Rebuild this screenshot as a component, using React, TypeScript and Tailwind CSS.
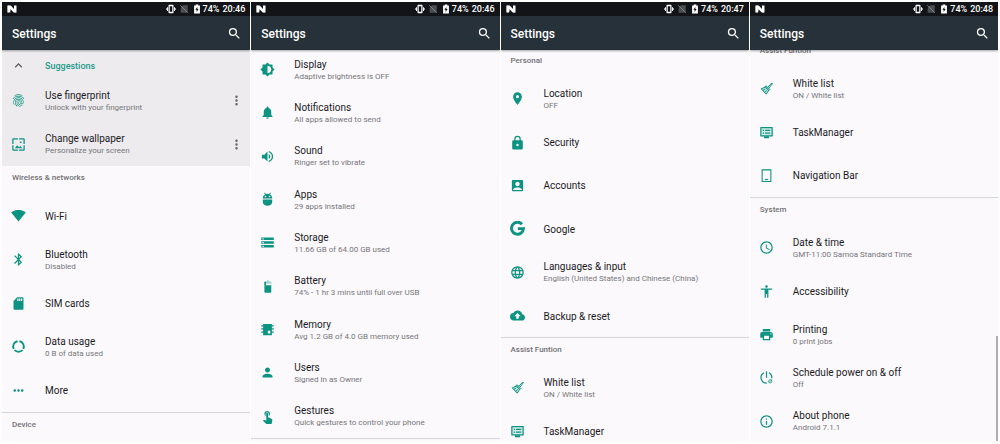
import type { ComponentType, ReactNode } from "react";
import {
  MdAccessTime,
  MdAccessibility,
  MdAccountBox,
  MdBackup,
  MdBluetooth,
  MdBrightness6,
  MdExpandLess,
  MdFingerprint,
  MdInfoOutline,
  MdLanguage,
  MdLocationOn,
  MdMoreHoriz,
  MdMoreVert,
  MdNotifications,
  MdPerson,
  MdPrint,
  MdSdCard,
  MdSearch,
  MdSignalWifi4Bar,
  MdStorage,
  MdTouchApp,
  MdVolumeUp,
  MdWallpaper,
} from "react-icons/md";

type IconProps = { className?: string };
type Icon = ComponentType<IconProps>;

function Svg({ className, children }: IconProps & { children: ReactNode }) {
  return (
    <svg viewBox="0 0 24 24" className={className} fill="currentColor" aria-hidden="true">
      {children}
    </svg>
  );
}

const DataUsageIcon: Icon = (p) => (
  <Svg {...p}>
    <g fill="none" stroke="currentColor" strokeWidth="3">
      <path d="M13.500 3.600A8.500 8.500 0 0 1 19.600 15.800" />
      <path d="M18.400 17.600A8.500 8.500 0 0 1 5.600 17.600" />
      <path d="M4.400 15.800A8.500 8.500 0 0 1 10.500 3.600" />
    </g>
  </Svg>
);

const AppsIcon: Icon = (p) => (
  <Svg {...p}>
    <path d="M4.500 12v4c0 3.800 3.300 6 7.500 6s7.500-2.200 7.500-6v-4z" />
    <path
      fillRule="evenodd"
      d="M15.700 3.700 17.500 1.800l-.9-.9-2.200 2.200a7 7 0 0 0-4.800 0L7.400.9l-.9.9 1.800 1.900a6.500 6.500 0 0 0-3.800 5.600v1.200h15V9.300a6.500 6.500 0 0 0-3.800-5.600zM8.700 8.400a1.300 1.300 0 1 1 0-2.600 1.300 1.300 0 0 1 0 2.600zm6.600 0a1.300 1.300 0 1 1 0-2.600 1.300 1.300 0 0 1 0 2.600z"
    />
  </Svg>
);

const BatteryIcon: Icon = (p) => (
  <Svg {...p}>
    <path d="M7 10v10.700c0 .7.600 1.300 1.300 1.300h8.400c.7 0 1.300-.6 1.300-1.300V10z" />
    <path opacity=".4" d="M16.700 4H14V2h-3v2H8.300C7.600 4 7 4.600 7 5.300V10h3V7h7l1 3V5.300c0-.7-.6-1.300-1.300-1.300z" />
    <path d="M7 4.500h2.500V10H7z" />
  </Svg>
);

const MemoryIcon: Icon = (p) => (
  <Svg {...p}>
    <path
      fillRule="evenodd"
      d="M5 3h14v2h3v2h-3v3h3v2h-3v3h3v2h-3v4H5v-4H2v-2h3v-3H2v-2h3V7H2V5h3zM12.500 14v4.500h4V14z"
    />
  </Svg>
);

const LockIcon: Icon = (p) => (
  <Svg {...p}>
    <path
      fillRule="evenodd"
      d="M18.500 8.500H17.200V6.200a5.200 5.200 0 0 0-10.400 0v2.300H5.500a2 2 0 0 0-2 2V21a2 2 0 0 0 2 2h13a2 2 0 0 0 2-2V10.500a2 2 0 0 0-2-2zM8.800 6.200a3.200 3.200 0 0 1 6.400 0v2.300H8.800zM12 18a2 2 0 1 1 0-4 2 2 0 0 1 0 4z"
    />
  </Svg>
);

const GoogleIcon: Icon = (p) => (
  <Svg {...p}>
    <path
      fill="none"
      stroke="currentColor"
      strokeWidth="4.600"
      d="M19.200 5.200A9.600 9.600 0 1 0 21.600 12.200H12.500"
    />
  </Svg>
);

const BrushIcon: Icon = (p) => (
  <Svg {...p}>
    <g fill="none" stroke="currentColor" strokeWidth="1.600" strokeLinejoin="round" strokeLinecap="round">
      <path d="M14.500 9.500 20.500 3.200l1 1-5.500 7" />
      <path fill="#8fd0c7" d="m11.700 8 5.500 5.500-2 2-5.500-5.500z" />
      <path fill="#bfe3de" d="m9.700 10-6.200 2.500 8 8.500 3.700-5.500z" />
      <path d="m6.500 15 3-2M9 18l3-2.500" />
    </g>
  </Svg>
);

const TaskIcon: Icon = (p) => (
  <Svg {...p}>
    <path fill="#d5ece9" stroke="currentColor" strokeWidth="2" strokeLinejoin="round" d="M3 4h18v13.500H3z" />
    <path d="M8 18h8v3H8zM6 7.500h2v2H6zM9.500 7.500H18v2H9.500zM6 12h2v2H6zM9.500 12H18v2H9.500z" />
  </Svg>
);

const NavigationIcon: Icon = (p) => (
  <Svg {...p}>
    <path fill="none" stroke="currentColor" strokeWidth="1.700" d="M5 3h14v18.500H5z" />
    <path d="M9.500 17.500h5v1.800h-5z" />
  </Svg>
);

const PowerIcon: Icon = (p) => (
  <Svg {...p}>
    <g fill="none" stroke="currentColor" strokeWidth="1.900">
      <path d="M12 2v10.500" />
      <path d="M8 4.300a8.800 8.800 0 0 0 4.500 16.600M16 4.300a9 9 0 0 1 4.400 9" />
      <circle cx="18" cy="18" r="2.600" strokeWidth="1.200" />
      <path strokeWidth="1.200" d="m15.500 21 5-6" />
    </g>
  </Svg>
);

const NougatIcon: Icon = (p) => (
  <Svg {...p}>
    <path fill="#9aa0a3" d="M3 5h4l14 14h-4zM3 5v14l6-3V8z" />
    <path d="M3 5h6.500L16 12V5h5v14h-5.500L8.500 12v7H3z" />
  </Svg>
);

const VibrateIcon: Icon = (p) => (
  <Svg {...p}>
    <path
      fillRule="evenodd"
      d="M7.500 2h9c1 0 1.500.7 1.500 1.500v17c0 .8-.5 1.500-1.500 1.500h-9C6.500 22 6 21.300 6 20.500v-17C6 2.700 6.500 2 7.500 2zM9 5.500v13h6v-13z"
    />
    <path d="M2.500 7.500h2.300v9H2.500zM19.200 7.500h2.300v9h-2.300zM0 10h1.800v4H0zM22.200 10H24v4h-1.800z" />
  </Svg>
);

const NoSimIcon: Icon = (p) => (
  <Svg {...p}>
    <path fill="#4c4f52" d="M10 3h11v18H4V9z" />
    <path fill="none" stroke="#8a8c8f" strokeWidth="2" d="m3 3 18 18" />
  </Svg>
);

const ChargeIcon: Icon = (p) => (
  <Svg {...p}>
    <path fillRule="evenodd" d="M9 1h6v2.500h4V23H5V3.500h4zM13 7l-5 7h3v5l5-7h-3z" />
  </Svg>
);

type Entry = { icon: Icon; title: string; note?: string; menu?: boolean };

function Row({ icon: RowIcon, title, note, menu }: Entry) {
  return (
    <li className="flex min-h-9 flex-1 basis-0 items-center">
      <button type="button" className="flex h-full min-w-0 flex-1 items-center gap-[19px] pl-[9px] text-left">
        <RowIcon className="size-[15px] shrink-0 text-[#0d9381]" />
        <span className="flex min-w-0 flex-col pt-0.5 whitespace-nowrap">
          <span className="text-[10px] leading-3 text-[#1c1b1f]">{title}</span>
          {note && <span className="text-[8px] leading-3 text-[#77767a]">{note}</span>}
        </span>
      </button>
      {menu && (
        <button type="button" aria-label={`Options for ${title}`} className="pr-1.5">
          <MdMoreVert className="size-[15px] text-[#6b6a6d]" />
        </button>
      )}
    </li>
  );
}

function Heading({ children, divided }: { children: ReactNode; divided?: boolean }) {
  return (
    <li className={divided ? "shrink-0 border-t border-[#d6d5d8]" : "shrink-0"}>
      <h2 className="flex h-7 items-center pb-1 pl-2.5 text-[8px] leading-3 font-medium text-[#727175]">
        {children}
      </h2>
    </li>
  );
}

function Rows({ items }: { items: Entry[] }) {
  return (
    <>
      {items.map((item) => (
        <Row key={item.title} {...item} />
      ))}
    </>
  );
}

function Phone({ time, children }: { time: string; children: ReactNode }) {
  return (
    <section className="relative flex min-w-0 flex-col overflow-hidden bg-[#fbf9fc]">
      <div className="relative z-10 shrink-0 shadow-[0_1px_2px_rgba(0,0,0,0.35)]">
        <div className="flex h-3.5 items-center bg-[#121418] pr-[5px] pl-1 text-[9px] leading-3 font-medium text-white">
          <NougatIcon className="size-3" />
          <div className="ml-auto flex items-center gap-[3px]">
            <VibrateIcon className="size-2.5" />
            <NoSimIcon className="size-2.5" />
            <div className="flex items-center gap-px">
              <ChargeIcon className="size-2.5" />
              <span>74%</span>
            </div>
            <span>{time}</span>
          </div>
        </div>
        <header className="flex h-[34px] items-center justify-between bg-[#27313a] pr-2 pl-2.5">
          <h1 className="pt-0.5 text-[12px] leading-4 font-medium text-white">Settings</h1>
          <button type="button" aria-label="Search settings">
            <MdSearch className="size-[15px] text-white" />
          </button>
        </header>
      </div>
      {children}
    </section>
  );
}

const suggestions: Entry[] = [
  { icon: MdFingerprint, title: "Use fingerprint", note: "Unlock with your fingerprint", menu: true },
  { icon: MdWallpaper, title: "Change wallpaper", note: "Personalize your screen", menu: true },
];

const wireless: Entry[] = [
  { icon: MdSignalWifi4Bar, title: "Wi-Fi" },
  { icon: MdBluetooth, title: "Bluetooth", note: "Disabled" },
  { icon: MdSdCard, title: "SIM cards" },
  { icon: DataUsageIcon, title: "Data usage", note: "0 B of data used" },
  { icon: MdMoreHoriz, title: "More" },
];

const device: Entry[] = [
  { icon: MdBrightness6, title: "Display", note: "Adaptive brightness is OFF" },
  { icon: MdNotifications, title: "Notifications", note: "All apps allowed to send" },
  { icon: MdVolumeUp, title: "Sound", note: "Ringer set to vibrate" },
  { icon: AppsIcon, title: "Apps", note: "29 apps installed" },
  { icon: MdStorage, title: "Storage", note: "11.66 GB of 64.00 GB used" },
  { icon: BatteryIcon, title: "Battery", note: "74% - 1 hr 3 mins until full over USB" },
  { icon: MemoryIcon, title: "Memory", note: "Avg 1.2 GB of 4.0 GB memory used" },
  { icon: MdPerson, title: "Users", note: "Signed in as Owner" },
  { icon: MdTouchApp, title: "Gestures", note: "Quick gestures to control your phone" },
];

const personal: Entry[] = [
  { icon: MdLocationOn, title: "Location", note: "OFF" },
  { icon: LockIcon, title: "Security" },
  { icon: MdAccountBox, title: "Accounts" },
  { icon: GoogleIcon, title: "Google" },
  { icon: MdLanguage, title: "Languages & input", note: "English (United States) and Chinese (China)" },
  { icon: MdBackup, title: "Backup & reset" },
];

const assist: Entry[] = [
  { icon: BrushIcon, title: "White list", note: "ON / White list" },
  { icon: TaskIcon, title: "TaskManager" },
  { icon: NavigationIcon, title: "Navigation Bar" },
];

const system: Entry[] = [
  { icon: MdAccessTime, title: "Date & time", note: "GMT-11:00 Samoa Standard Time" },
  { icon: MdAccessibility, title: "Accessibility" },
  { icon: MdPrint, title: "Printing", note: "0 print jobs" },
  { icon: PowerIcon, title: "Schedule power on & off", note: "Off" },
  { icon: MdInfoOutline, title: "About phone", note: "Android 7.1.1" },
];

export default function App() {
  return (
    <main className="grid min-h-screen grid-cols-4 gap-px bg-white px-0.5 pt-0.5 pb-[3px] font-[Roboto,sans-serif]">
      <Phone time="20:46">
        <div className="flex flex-[2_0_29px] flex-col bg-[#edebee]">
          <button type="button" className="flex h-[29px] shrink-0 items-center gap-[19px] pt-0.5 pl-[9px]">
            <MdExpandLess className="size-[15px] text-[#59585c]" />
            <span className="text-[9px] leading-3 font-medium text-[#1d9a89]">Suggestions</span>
          </button>
          <ul className="flex flex-1 flex-col">
            <Rows items={suggestions} />
          </ul>
        </div>
        <ul className="flex flex-[5_0_57px] flex-col">
          <Heading>Wireless &amp; networks</Heading>
          <Rows items={wireless} />
          <Heading divided>Device</Heading>
        </ul>
      </Phone>

      <Phone time="20:46">
        <ul className="-mt-0.5 mb-0.5 flex flex-1 flex-col border-b border-[#d6d5d8]">
          <Rows items={device} />
        </ul>
      </Phone>

      <Phone time="20:47">
        <ul className="-mt-px -mb-3 flex flex-1 flex-col">
          <Heading>Personal</Heading>
          <Rows items={personal} />
          <Heading divided>Assist Funtion</Heading>
          <Rows items={assist.slice(0, 2)} />
        </ul>
      </Phone>

      <Phone time="20:48">
        <ul className="-mt-[11px] -mb-0.5 flex flex-1 flex-col">
          <Heading>Assist Funtion</Heading>
          <Rows items={assist} />
          <Heading divided>System</Heading>
          <Rows items={system} />
        </ul>
        <div className="absolute right-0 bottom-0 h-[24%] w-0.5 bg-[#adacaf]" />
      </Phone>
    </main>
  );
}
